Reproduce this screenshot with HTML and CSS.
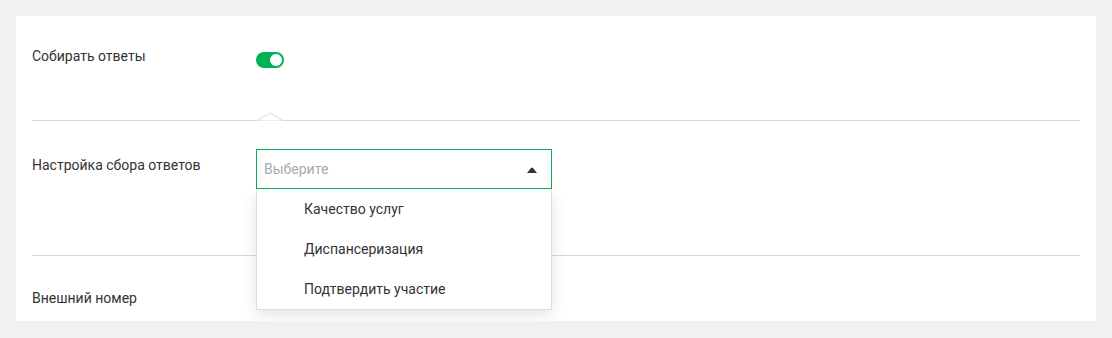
FILE: index.html
```html
<!DOCTYPE html>
<html lang="ru">
<head>
  <meta charset="utf-8" />
  <meta name="viewport" content="width=device-width, initial-scale=1" />
  <title>Настройки опроса</title>
  <link rel="stylesheet" href="styles.css">
</head>
<body>
  <div class="card">
    <div class="form-row row-toggle">
      <div class="form-label">Собирать ответы</div>
      <div class="form-control">
        <span class="switch switch-on"><span class="switch-knob"></span></span>
      </div>
      <svg class="row-caret" width="26" height="9" viewBox="0 0 26 9">
        <polygon points="0,8.5 13,1 26,8.5" fill="#fff" />
        <polyline points="0,8.5 13,1 26,8.5" fill="none" stroke="#d9d9d9" stroke-width="1" />
      </svg>
    </div>

    <div class="form-row row-select">
      <div class="form-label label-select">Настройка сбора ответов</div>
      <div class="form-control">
        <div class="select select-open">
          <div class="select-field">
            <span class="select-placeholder">Выберите</span>
            <svg class="select-arrow" width="10" height="6" viewBox="0 0 10 6">
              <path d="M0 6 L4 1 Q5 -0.2 6 1 L10 6 Z" fill="#333" />
            </svg>
          </div>
          <ul class="select-menu">
            <li class="select-option">Качество услуг</li>
            <li class="select-option">Диспансеризация</li>
            <li class="select-option">Подтвердить участие</li>
          </ul>
        </div>
      </div>
    </div>

    <div class="form-row row-last">
      <div class="form-label">Внешний номер</div>
    </div>
  </div>
</body>
</html>
```

FILE: styles.css
```css
* {
  margin: 0;
  padding: 0;
  box-sizing: border-box;
}

body {
  background-color: #f1f1f1;
  font-family: Roboto, "Noto Sans", Arial, sans-serif;
  font-size: 14px;
  line-height: 20px;
  color: #333;
  padding: 16px 16px 0;
}

.card {
  background-color: #fff;
  padding: 0 16px;
  height: 305px;
}

.form-row {
  display: flex;
  align-items: flex-start;
  position: relative;
  border-bottom: 1px solid #d9d9d9;
}

.form-label {
  width: 224px;
  flex-shrink: 0;
}

.form-control {
  flex: 1;
}

/* Row 1: toggle */
.row-toggle {
  padding: 30px 0 52px;
}

.switch {
  display: block;
  width: 28px;
  height: 16px;
  margin-top: 6px;
  border-radius: 8px;
  background-color: #ccc;
  position: relative;
}

.switch-on {
  background-color: #00b253;
}

.switch-knob {
  position: absolute;
  top: 2px;
  left: 2px;
  width: 12px;
  height: 12px;
  border-radius: 50%;
  background-color: #fff;
}

.switch-on .switch-knob {
  left: 14px;
}

.row-caret {
  position: absolute;
  left: 225px;
  bottom: -1px;
  display: block;
}

/* Row 2: select */
.row-select {
  padding: 28px 0 66px;
}

.label-select {
  margin-top: 6px;
}

.select {
  width: 296px;
  position: relative;
}

.select-field {
  height: 40px;
  border: 1px solid #00b253;
  display: flex;
  align-items: center;
  justify-content: space-between;
  padding: 0 14px 0 7px;
}

.select-placeholder {
  color: #aaa;
}

.select-arrow {
  display: block;
  margin-top: 2px;
}

.select-menu {
  list-style: none;
  position: absolute;
  top: 100%;
  left: 0;
  right: 0;
  background-color: #fff;
  border: 1px solid #ddd;
  border-top: none;
  box-shadow: 0 6px 14px rgba(0, 0, 0, 0.1);
  z-index: 10;
}

.select-option {
  height: 40px;
  line-height: 40px;
  padding-left: 47px;
  color: #333;
}

/* Row 3 */
.row-last {
  border-bottom: none;
  padding-top: 32px;
}
```
